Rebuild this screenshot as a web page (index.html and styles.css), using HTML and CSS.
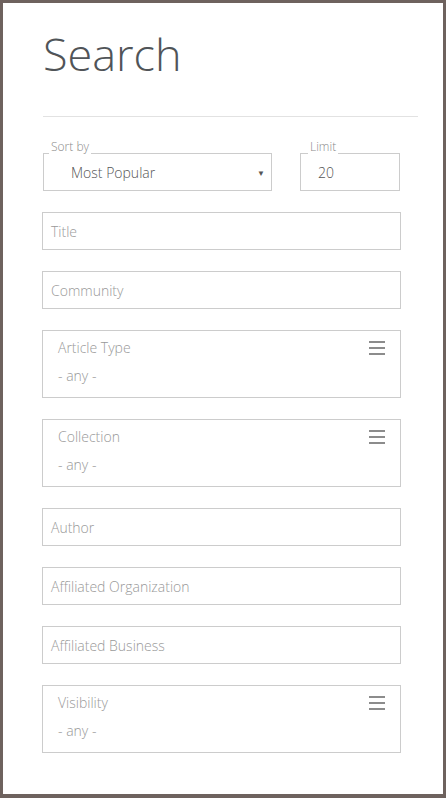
FILE: index.html
```html
<!DOCTYPE html>
<html>

<head>
    <meta charset="UTF-8">
    <meta name="viewport" content="width=device-width, initial-scale=1.0">
    <title>Search</title>
    <link rel="stylesheet" href="styles.css">
</head>

<body>
    <div class="page">
        <h1 class="title">Search</h1>
        <hr class="divider">

        <form class="search-form">
            <div class="top-row">
                <fieldset class="framed sort">
                    <legend>Sort by</legend>
                    <span class="value">Most Popular</span>
                    <span class="arrow">&#9660;</span>
                </fieldset>
                <fieldset class="framed limit">
                    <legend>Limit</legend>
                    <span class="value">20</span>
                </fieldset>
            </div>

            <div class="field">Title</div>
            <div class="field">Community</div>

            <!-- multi select boxes -->
            <div class="multi">
                <div class="multi-head">
                    <span>Article Type</span>
                    <span class="burger"><i></i><i></i><i></i></span>
                </div>
                <div class="any">- any -</div>
            </div>

            <div class="multi">
                <div class="multi-head">
                    <span>Collection</span>
                    <span class="burger"><i></i><i></i><i></i></span>
                </div>
                <div class="any">- any -</div>
            </div>

            <div class="field">Author</div>
            <div class="field">Affiliated Organization</div>
            <div class="field">Affiliated Business</div>

            <div class="multi">
                <div class="multi-head">
                    <span>Visibility</span>
                    <span class="burger"><i></i><i></i><i></i></span>
                </div>
                <div class="any">- any -</div>
            </div>
        </form>
    </div>
</body>

</html>
```

FILE: styles.css
```css
html, body {
    margin: 0;
    background-color: #ffffff;
}

.page {
    box-sizing: border-box;
    width: 446px;
    height: 798px;
    border: 3px solid #6e625e;
    border-bottom-width: 4px;
    padding: 0 42px 0 39px;
    font-family: "Open Sans", sans-serif;
    overflow: hidden;
}

.title {
    margin: 21px 0 0 1px;
    font-size: 45px;
    font-weight: 300;
    line-height: 60px;
    color: #505458;
}

.divider {
    border: none;
    border-top: 1px solid #e2e2e2;
    margin: 32px -17px 0 1px;
    height: 0;
}

.search-form {
    display: flex;
    flex-direction: column;
    gap: 21px;
    margin-top: 24px;
}

.top-row {
    display: flex;
    justify-content: space-between;
    padding: 0 1px 0 1px;
}

.framed {
    box-sizing: border-box;
    height: 50px;
    margin: 0;
    padding: 0 4px;
    border: 1px solid #cccccc;
    display: flex;
    align-items: center;
    color: #555555;
    font-size: 14px;
    font-weight: 300;
}

.framed legend {
    font-size: 12px;
    line-height: 12px;
    color: #8a8a8a;
    padding: 0 2px 12px 2px;
}

.framed .value {
    margin-top: -10px;
}

.sort {
    width: 229px;
    padding-right: 6px;
}

.sort legend {
    margin-left: 1px;
}

.sort .value {
    flex: 1;
    margin-left: 23px;
}

.arrow {
    font-size: 8px;
    color: #555555;
    margin-top: -10px;
}

.limit {
    width: 100px;
}

.limit legend {
    margin-left: 3px;
}

.limit .value {
    margin-left: 13px;
}

.field {
    box-sizing: border-box;
    height: 38px;
    border: 1px solid #cccccc;
    padding: 0 8px;
    display: flex;
    align-items: center;
    color: #999999;
    font-size: 14px;
    font-weight: 300;
}

.multi {
    box-sizing: border-box;
    height: 68px;
    border: 1px solid #cccccc;
    padding: 6px 15px 0 15px;
    color: #999999;
    font-size: 14px;
    font-weight: 300;
}

.multi-head {
    display: flex;
    justify-content: space-between;
    align-items: center;
    height: 20px;
}

.any {
    margin-top: 9px;
}

.burger {
    display: flex;
    flex-direction: column;
    gap: 4px;
    width: 16px;
    margin-top: 1px;
}

.burger i {
    display: block;
    height: 2px;
    background-color: #8c8c8c;
}
```
